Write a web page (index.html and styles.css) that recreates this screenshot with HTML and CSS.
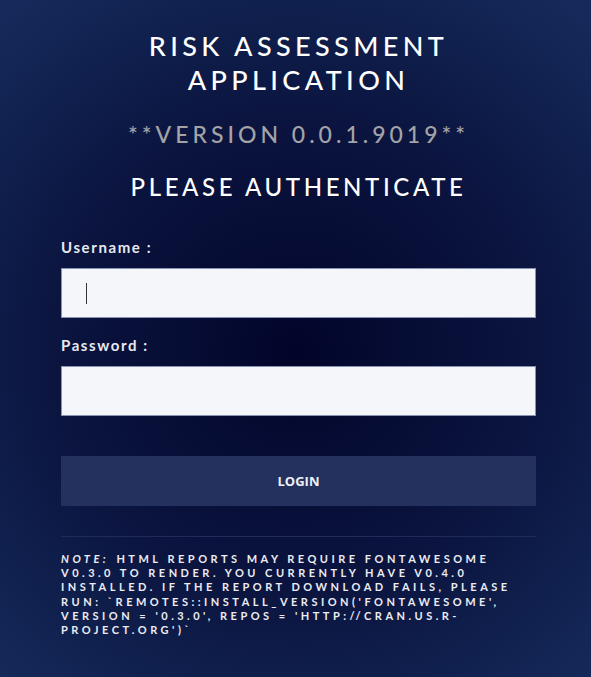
FILE: index.html
```html
<!DOCTYPE html>
<html>
<head>
<meta charset="utf-8">
<link rel="stylesheet" href="styles.css">
</head>
<body>
<main class="panel">
  <h1 class="title">Risk Assessment Application</h1>
  <h2 class="version">**Version 0.0.1.9019**</h2>
  <h2 class="prompt">Please Authenticate</h2>
  <form class="form">
    <label class="label">Username :</label>
    <div class="input"><span class="caret"></span></div>
    <label class="label">Password :</label>
    <div class="input"></div>
    <button type="button" class="login">LOGIN</button>
  </form>
  <hr class="rule">
  <p class="note"><em class="note-tag">Note:</em> HTML reports may require fontawesome v0.3.0 to render. You currently have v0.4.0 installed. If the report download fails, please run: `remotes::install_version('fontawesome', version = '0.3.0', repos = 'http://cran.us.r-project.org')`</p>
</main>
</body>
</html>
```
FILE: styles.css
```css
html, body {
  margin: 0;
  height: 100%;
}
body {
  background: radial-gradient(ellipse 75% 65% at 50% 52%, #02052a 0%, #0b1540 55%, #152a5a 100%);
  font-family: "Lato", "Open Sans", sans-serif;
  color: #ffffff;
}
.panel {
  margin: 0 55px 0 61px;
  padding-top: 29px;
}
.title {
  margin: 0;
  text-align: center;
  font-size: 27px;
  font-weight: 500;
  letter-spacing: 4.4px;
  line-height: 34px;
  text-transform: uppercase;
}
.version {
  margin: 23px 0 0;
  text-align: center;
  font-size: 23px;
  font-weight: 500;
  letter-spacing: 4px;
  line-height: 28px;
  color: #a3a3a8;
  text-transform: uppercase;
}
.prompt {
  margin: 25px 0 0;
  text-align: center;
  font-size: 24px;
  font-weight: 500;
  letter-spacing: 3.6px;
  line-height: 28px;
  text-transform: uppercase;
}
.form {
  display: flex;
  flex-direction: column;
  margin-top: 36px;
}
.label {
  font-size: 15px;
  font-weight: 700;
  letter-spacing: 1.6px;
  line-height: 20px;
  color: #e8e9f0;
  margin-bottom: 11px;
}
.input {
  height: 50px;
  box-sizing: border-box;
  background: #f5f6f9;
  border: 1px solid #8a92b4;
  display: flex;
  align-items: center;
  padding-left: 24px;
  margin-bottom: 17px;
}
.caret {
  width: 1px;
  height: 21px;
  background: #333;
}
.input + .login {
  margin-top: 23px;
}
.login {
  height: 50px;
  border: 0;
  background: #24305e;
  color: #eef0f6;
  font-family: "Open Sans", sans-serif;
  font-weight: 700;
  font-size: 13px;
}
.rule {
  margin: 30px 0 0;
  border: 0;
  border-top: 1px solid #1f2c5a;
}
.note {
  margin: 15px 0 0;
  font-size: 11px;
  font-weight: 700;
  letter-spacing: 3.5px;
  line-height: 14.2px;
  text-transform: uppercase;
  color: #ececf2;
}
.note-tag {
  font-style: italic;
  margin-right: 1px;
}
```
